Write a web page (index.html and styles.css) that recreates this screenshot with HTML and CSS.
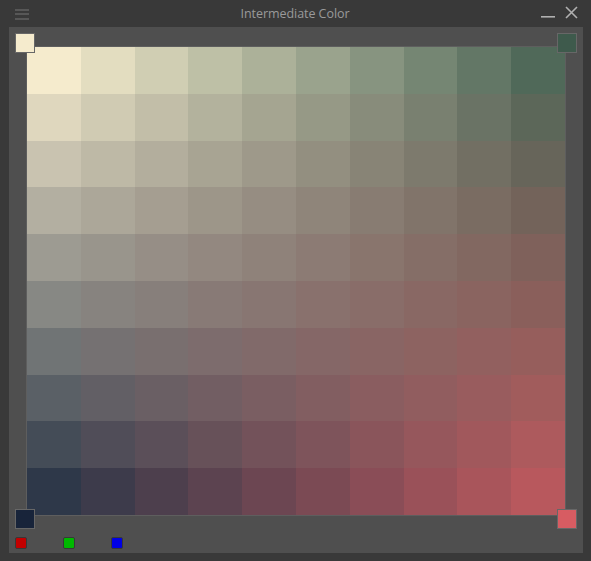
FILE: index.html
```html
<!DOCTYPE html>
<html>
<head>
<meta charset="utf-8">
<link rel="stylesheet" href="styles.css">
</head>
<body>
<div class="window">
  <div class="titlebar">
    <svg class="menu" width="16" height="14" viewBox="0 0 16 14">
      <rect x="0" y="0" width="14" height="2" fill="#575757"/>
      <rect x="0" y="4" width="14" height="2" fill="#575757"/>
      <rect x="0" y="9" width="14" height="2" fill="#575757"/>
    </svg>
    <div class="title">Intermediate Color</div>
    <div class="controls">
      <svg class="min" width="15" height="14" viewBox="0 0 15 14">
        <rect x="0" y="10" width="14" height="1.6" fill="#b0b0b0"/>
      </svg>
      <svg class="close" width="13" height="13" viewBox="0 0 13 13">
        <path d="M1 1 L12 12 M12 1 L1 12" stroke="#b0b0b0" stroke-width="1.6" fill="none"/>
      </svg>
    </div>
  </div>
  <div class="panel">
    <div class="grid" id="grid"></div>
    <div class="channels">
      <span class="chan red"></span>
      <span class="chan green"></span>
      <span class="chan blue"></span>
    </div>
    <span class="swatch tl"></span>
    <span class="swatch tr"></span>
    <span class="swatch bl"></span>
    <span class="swatch br"></span>
  </div>
</div>
<script src="script.js"></script>
</body>
</html>
```
FILE: styles.css
```css
html, body {
  margin: 0;
  padding: 0;
  background: #393939;
  font-family: "Open Sans", "Noto Sans", sans-serif;
}
.window {
  width: 591px;
  height: 561px;
  display: flex;
  flex-direction: column;
}
.titlebar {
  height: 27px;
  display: flex;
  align-items: center;
  position: relative;
}
.menu {
  margin-left: 15px;
  margin-top: 4px;
}
.title {
  flex: 1;
  text-align: center;
  color: #9a9a9a;
  font-size: 12.5px;
  letter-spacing: -0.05px;
  margin-left: 18px;
  margin-top: -1px;
}
.controls {
  display: flex;
  align-items: center;
  gap: 9px;
  margin-right: 13px;
  margin-top: -2px;
}
.panel {
  position: relative;
  margin-left: 9px;
  width: 574px;
  height: 526px;
  background: #4f4f4f;
  box-sizing: border-box;
  padding: 19px 0 0 17px;
}
.grid {
  width: 540px;
  height: 470px;
  box-sizing: border-box;
  border: 1px solid #5e5e5e;
  display: grid;
  grid-template-columns: repeat(10, 1fr);
  grid-template-rows: repeat(10, 1fr);
}
.channels {
  display: flex;
  gap: 36px;
  margin-top: 21px;
  margin-left: -11px;
}
.chan {
  width: 12px;
  height: 12px;
  box-sizing: border-box;
  border: 1px solid #383838;
  border-radius: 2px;
}
.red { background: #c20000; }
.green { background: #00b800; }
.blue { background: #0000e6; }
.swatch {
  position: absolute;
  width: 20px;
  height: 20px;
  box-sizing: border-box;
  border: 1px solid #676767;
}
.tl { left: 6px; top: 6px; background: #f5ebcd; }
.tr { left: 548px; top: 6px; background: #3e5a4c; }
.bl { left: 6px; top: 482px; background: #18243a; }
.br { left: 548px; top: 482px; background: #d75c62; }
```
FILE: script.js
```js
(function () {
  var tl = [245, 235, 205], tr = [62, 90, 76], bl = [24, 36, 58], br = [215, 92, 98];
  var grid = document.getElementById('grid');
  for (var r = 0; r < 10; r++) {
    for (var c = 0; c < 10; c++) {
      var u = c / 10, v = r / 10;
      var col = [];
      for (var k = 0; k < 3; k++) {
        var top = tl[k] * (1 - u) + tr[k] * u;
        var bot = bl[k] * (1 - u) + br[k] * u;
        col.push(Math.round(top * (1 - v) + bot * v));
      }
      var d = document.createElement('div');
      d.style.background = 'rgb(' + col.join(',') + ')';
      grid.appendChild(d);
    }
  }
})();
```
